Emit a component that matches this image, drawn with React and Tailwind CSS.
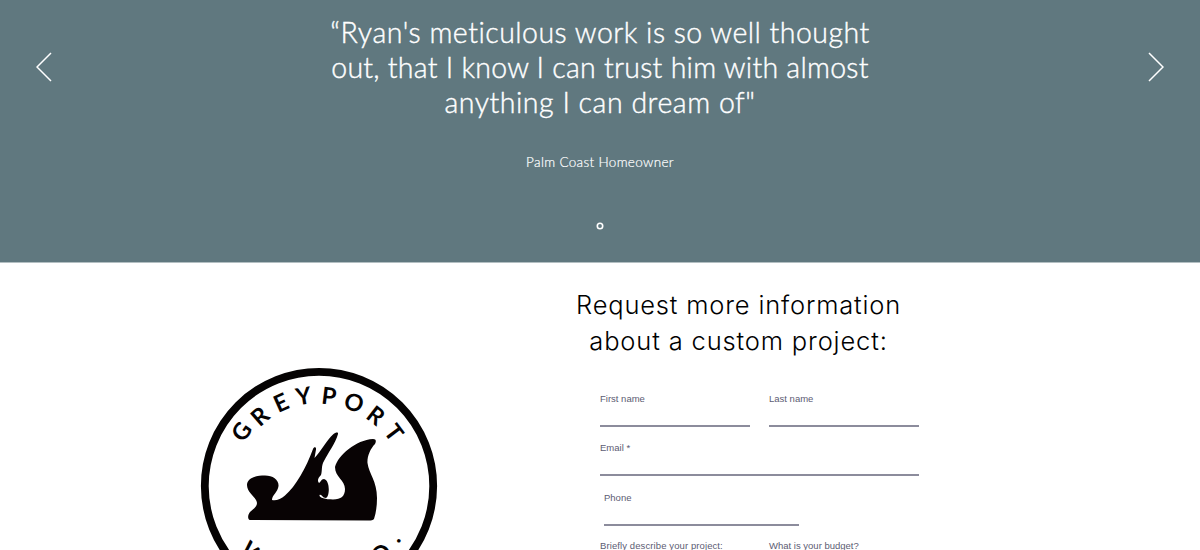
const RING_TEXT = [
  ["G", 241.5, 431.5, -55],
  ["R", 260, 416, -41],
  ["E", 281, 402.5, -24],
  ["Y", 303.5, 396, -9],
  ["P", 329, 396, 7],
  ["O", 354, 402.5, 23],
  ["R", 376, 415.5, 38],
  ["T", 394, 432.5, 53],
  ["W", 253, 554, 44],
  ["O", 381, 554, -40],
  [".", 393.5, 536.5, -50],
];

function Logo() {
  return (
    <svg width="238" height="184" viewBox="200 366 238 184" className="block overflow-hidden" role="img" aria-label="Greyport Woodworking Co.">
      <circle cx="319" cy="486" r="114.2" fill="none" stroke="#050303" strokeWidth="7.8" />
      <g fontFamily="Lato, sans-serif" fontWeight="700" fontSize="23.5" textAnchor="middle" fill="#050303">
        {RING_TEXT.map(([c, x, y, a], i) => (
          <text key={i} transform={`translate(${x} ${y}) rotate(${a})`} y="8.5">{c}</text>
        ))}
      </g>
      <path
        fill="#080304"
        d="M250 520 C247.500 519.500 247.500 515 250 512 C253 509 257 507 257 503 C256.500 497 247 493 247 485 C247 478 256 475.500 265 475.500 C273 475.500 279 480 278.500 486 C278 492 272 495 272 500 C276 501 281 499 285 495.500 C296 486 306 468 313 449 C314 446.500 316.500 447 316 449.500 L314.500 458 C321 451 327 440 333 434.500 C336 432 338.500 432 338 434 C335.500 443 328 453 324 461 C321 466 322.500 471 321 475 C318 478 317 481 319 483 C321 482 321 479 324 479 C330 480 330 496 326 498 C322 498 322 494 319.500 495 C319 498 325 499.500 333 499.500 C341 499.500 345 496 345 489 C345 480 335 477 335 467 C338 455 356 440 373 439 C376 439 376.500 441 375 444 C370 449 367 457 367.500 463 C369 474 377 481 377 498 C377 506 376 513 374 519 C373 520 371 520.500 369 520.500 Z"
      />
    </svg>
  );
}

function Field({ label, className }) {
  return (
    <label className={`flex flex-col border-b-2 border-[#8c8c9c] text-[9.5px] leading-[12px] text-[#5c5c73] ${className}`}>
      <span className="whitespace-nowrap">{label}</span>
    </label>
  );
}

export default function App() {
  return (
    <div className="h-[550px] w-[1200px] overflow-hidden bg-white">
      <section className="flex h-[263px] justify-between border-b border-[#b3bfc2] bg-[#60787f] px-9 text-white">
        <button className="mt-[52px] h-[30px] w-4" aria-label="Previous">
          <svg width="16" height="30" viewBox="0 0 16 30" fill="none" stroke="white" strokeWidth="1.5"><path d="M15 1 L1 15 L15 29" /></svg>
        </button>
        <div className="flex flex-col items-center font-['Lato',sans-serif]">
          <blockquote className="flex flex-col items-center pt-[15px] text-[28.5px] leading-[35px] font-light whitespace-nowrap [-webkit-text-stroke:0.4px_white]">
            <span className="tracking-[0.48px]">“Ryan's meticulous work is so well thought</span>
            <span className="tracking-[0.26px]">out, that I know I can trust him with almost</span>
            <span className="tracking-[0.53px]">anything I can dream of"</span>
          </blockquote>
          <p className="mt-8 text-[13.5px] leading-5 font-light tracking-[0.33px] [-webkit-text-stroke:0.2px_white]">Palm Coast Homeowner</p>
          <svg width="8" height="8" viewBox="0 0 8 8" className="mt-[50px] block" fill="none" stroke="white" strokeWidth="1.6"><circle cx="4" cy="4" r="2.7" /></svg>
        </div>
        <button className="mt-[52px] h-[30px] w-4" aria-label="Next">
          <svg width="16" height="30" viewBox="0 0 16 30" fill="none" stroke="white" strokeWidth="1.5"><path d="M1 1 L15 15 L1 29" /></svg>
        </button>
      </section>
      <section className="flex">
        <div className="ml-[200px] w-[376px] shrink-0 pt-[103px]"><Logo /></div>
        <div className="w-[344px] shrink-0 pt-6">
          <h2 className="flex w-[325px] flex-col items-center font-['Inter',sans-serif] text-[25.5px] leading-9 font-light whitespace-nowrap text-black">
            <span className="tracking-[0.82px]">Request more information</span>
            <span className="tracking-[0.85px]">about a custom project:</span>
          </h2>
          <form className="ml-6 w-[319px] pt-[34px] font-['Liberation_Sans',sans-serif]">
            <div className="flex gap-[19px]">
              <Field label="First name" className="h-[34px] w-[150px]" />
              <Field label="Last name" className="h-[34px] w-[150px]" />
            </div>
            <Field label="Email *" className="mt-[15px] h-[34px] w-[319px]" />
            <Field label="Phone" className="mt-4 ml-1 h-[34px] w-[195px]" />
            <div className="mt-[14px] flex gap-[19px]">
              <Field label="Briefly describe your project:" className="h-[33px] w-[150px] tracking-[0.1px]" />
              <Field label="What is your budget?" className="h-[33px] w-[150px]" />
            </div>
          </form>
        </div>
      </section>
    </div>
  );
}
